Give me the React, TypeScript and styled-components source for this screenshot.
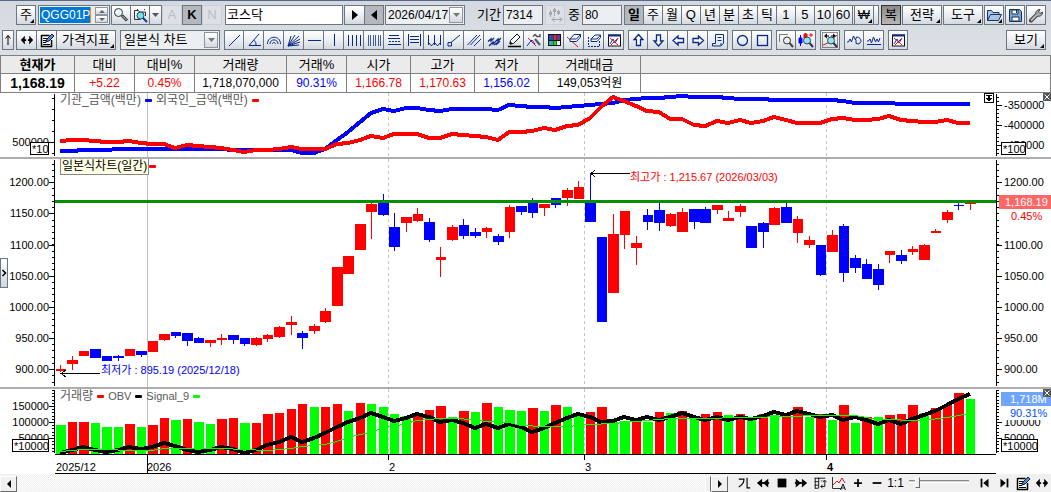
import React from "react";
import styled, { createGlobalStyle, css } from "styled-components";

const NAVY = "#0a2a86";
const RED = "#ff0000";
const BLUE = "#0000ff";
const LIME = "#00ff00";
const FRAME = "#6c7580";
const FONT = `"Liberation Sans", "Noto Sans CJK KR", sans-serif`;

const GlobalStyle = createGlobalStyle`
  * { box-sizing: border-box; }
  body { margin: 0; background: #fff; }
  button, input, select { font-family: ${FONT}; font-size: 12px; color: #000; margin: 0; }
`;

const Page = styled.div`
  display: flex;
  flex-direction: column;
  min-height: 100vh;
  font-family: ${FONT};
  font-size: 12px;
  background: #fff;
  overflow: hidden;
`;

/* ---------- toolbars ---------- */

const Toolbars = styled.header`
  display: flex;
  flex-direction: column;
  gap: 5px;
  padding: 4px 5px 5px 2px;
  border-top: 1px solid #56678a;
  background: linear-gradient(#d3d9df, #dde1e6);
`;

const ToolRow = styled.div`
  display: flex;
  align-items: stretch;
  height: 20px;
`;

const Group = styled.div<{ $gap?: number; $end?: boolean }>`
  display: flex;
  margin-left: ${(p) => (p.$end ? "auto" : `${p.$gap ?? 0}px`)};
`;

type Tone = "normal" | "pressed" | "disabled" | "dark";

const ToolButton = styled.button<{ $w?: number; $tone?: Tone; $menu?: boolean; $joined?: boolean; $gap?: number }>`
  position: relative;
  flex: none;
  display: flex;
  align-items: center;
  justify-content: center;
  width: ${(p) => p.$w ?? 20}px;
  height: 20px;
  padding: 0;
  margin-left: ${(p) => (p.$joined ? -1 : p.$gap ?? 0)}px;
  border: 1px solid ${FRAME};
  background: linear-gradient(#ffffff, #eef1f4 45%, #d3d9e1);
  font-size: 13px;
  line-height: 18px;
  white-space: nowrap;
  ${(p) => p.$tone === "pressed" && css`background: #b3b8bf; font-weight: 700;`}
  ${(p) => p.$tone === "dark" && css`background: linear-gradient(#8b8b8b, #b5b5b5); border-color: #333;`}
  ${(p) => p.$tone === "disabled" && css`background: #dde1e5; border-color: #cbd0d6; color: #b9bec4;`}
  ${(p) => p.$menu && css`
    &::after {
      content: "";
      position: absolute;
      right: 1px;
      bottom: 1px;
      border: 2px solid transparent;
      border-right-color: #000;
      border-bottom-color: #000;
    }
  `}
`;

const Field = styled.div<{ $w: number; $gap?: number; $plain?: boolean }>`
  display: flex;
  flex: none;
  width: ${(p) => p.$w}px;
  height: 20px;
  margin-left: ${(p) => p.$gap ?? 0}px;
  border: 1px solid ${FRAME};
  padding: ${(p) => (p.$plain ? 0 : 1)}px;
  background: ${(p) => (p.$plain ? "#fff" : "#eceff2")};
`;

const TextInput = styled.input<{ $selected?: boolean; $size?: number }>`
  flex: 1;
  min-width: 0;
  width: 0;
  border: 0;
  outline: 0;
  padding: 0 1px;
  background: transparent;
  font-size: ${(p) => p.$size ?? 12}px;
  line-height: 16px;
  ${(p) => p.$selected && css`
    color: #fff;
    background: linear-gradient(90deg, #0078d7 50px, #ff8c00 50px, #ff8c00 51px, transparent 51px);
  `}
`;

const Select = styled.select`
  flex: 1;
  min-width: 0;
  appearance: none;
  border: 0;
  outline: 0;
  padding: 0 2px;
  background: transparent;
  font-size: 13px;
  line-height: 16px;
`;

const DropMark = styled.span`
  flex: none;
  display: flex;
  align-items: center;
  justify-content: center;
  width: 14px;
  height: 16px;
  border: 1px solid #8e959d;
  background: linear-gradient(#fff, #d3d9e1);
`;

const DropButton = styled(DropMark).attrs({ as: "button" })`
  padding: 0;
`;

const Spinner = styled.div`
  display: flex;
  flex-direction: column;
  width: 13px;
`;

const SpinButton = styled.button`
  height: 8px;
  padding: 0;
  display: flex;
  align-items: center;
  justify-content: center;
  border: 1px solid #8e959d;
  background: linear-gradient(#fff, #d3d9e1);
`;

const FieldLabel = styled.label<{ $gap: number }>`
  margin-left: ${(p) => p.$gap}px;
  font-size: 13px;
  line-height: 19px;
  white-space: nowrap;
`;

const WonSlot = styled.div`
  display: flex;
  justify-content: flex-start;
  width: 27px;
  height: 20px;
  margin-left: -1px;
  padding-left: 2px;
  border: 1px solid ${FRAME};
  border-left: 0;
  background: linear-gradient(#fff, #d3d9e1);
`;

const Won = styled(ToolButton)`
  border-width: 0 1px;
  height: 18px;
`;

/* ---------- quote table ---------- */

const QuoteTable = styled.table`
  width: 100%;
  height: 38px;
  table-layout: fixed;
  border-collapse: collapse;
  th, td {
    border: 1px solid #808080;
    padding: 0;
    height: 18px;
    line-height: 16px;
    text-align: center;
    white-space: nowrap;
  }
  th { background: #ebebeb; font-weight: 400; font-size: 13px; }
  td { background: #fff; font-size: 12px; }
`;

const Th = styled.th<{ $strong?: boolean }>`
  && { font-weight: ${(p) => (p.$strong ? 700 : 400)}; }
`;

const Td = styled.td<{ $color?: string; $strong?: boolean }>`
  color: ${(p) => p.$color ?? "#000"};
  && {
    font-weight: ${(p) => (p.$strong ? 700 : 400)};
    font-size: ${(p) => (p.$strong ? 14 : 12)}px;
  }
`;

/* ---------- charts ---------- */

const Pane = styled.section<{ $h: number; $divided?: boolean }>`
  position: relative;
  display: grid;
  grid-template-columns: 55px minmax(0, 1fr) 55px;
  height: ${(p) => p.$h + (p.$divided ? 2 : 0)}px;
  border-bottom: ${(p) => (p.$divided ? "2px solid #adadad" : "0")};
  svg { display: block; }
`;

const AxisSvg = styled.svg`
  width: 55px;
  overflow: hidden;
  font-size: 11px;
`;

const PlotSvg = styled.svg`
  width: 100%;
  font-size: 11px;
`;

const Legend = styled.div`
  position: absolute;
  left: 60px;
  top: 0;
  display: flex;
  align-items: center;
  height: 15px;
  gap: 4px;
  color: #585858;
  line-height: 15px;
`;

const LegendText = styled.span<{ $latin?: boolean; $boxed?: boolean }>`
  font-size: ${(p) => (p.$latin ? 11 : 12)}px;
  white-space: nowrap;
  ${(p) => p.$boxed && css`
    color: #000;
    background: #ffffe6;
    border: 1px solid #888;
    border-top: 0;
    margin-top: 1px;
    margin-right: -4px;
    padding: 0 1px;
  `}
`;

const Dash = styled.span<{ $color: string }>`
  width: 7px;
  height: 3px;
  border-radius: 1px;
  background: ${(p) => p.$color};
`;

const CloseButton = styled.button`
  position: absolute;
  top: 0;
  right: 0;
  width: 8px;
  height: 8px;
  padding: 0;
  border: 0;
  background: #555;
`;

const PinButton = styled.button`
  position: absolute;
  top: 0;
  right: 57px;
  width: 10px;
  height: 10px;
  padding: 0;
  border: 1px solid #000;
  background: #fff;
`;

const SideHandle = styled.button`
  position: absolute;
  left: 0;
  top: 99px;
  width: 8px;
  height: 30px;
  padding: 0;
  border: 1px solid ${FRAME};
  background: linear-gradient(#fff, #cfd6de);
`;

/* ---------- bottom bar ---------- */

const BottomBar = styled.footer`
  display: flex;
  align-items: stretch;
  height: 18px;
  background: #f0f0f0;
`;

const Track = styled.div`
  flex: 1;
  background: repeating-conic-gradient(#ffffff 0 25%, #eeeeee 0 50%) 0 0 / 2px 2px;
`;

const ScrollButton = styled.button`
  width: 17px;
  height: 16px;
  margin-top: 2px;
  padding: 0;
  display: flex;
  align-items: center;
  justify-content: center;
  border: 1px solid #fff;
  border-right-color: #696969;
  border-bottom-color: #696969;
  background: #f0f0f0;
`;

const Splitter = styled.div`
  width: 6px;
  margin-top: 2px;
  border: 1px solid #fff;
  border-right-color: #696969;
  background: #f0f0f0;
`;

const FlatButton = styled.button`
  width: 19px;
  padding: 0;
  display: flex;
  align-items: center;
  justify-content: center;
  border: 0;
  background: transparent;
  font-size: 12px;
  line-height: 18px;
`;

const FlatGroup = styled.div`
  display: flex;
  margin-left: 6px;
`;

const Zoomer = styled.input`
  appearance: none;
  width: 60px;
  height: 14px;
  margin: 0 6px 0 4px;
  background: transparent;
  &::-webkit-slider-runnable-track {
    height: 3px;
    border-top: 1px solid #8a8a8a;
    border-bottom: 1px solid #fff;
    background: #d5d5d5;
  }
  &::-webkit-slider-thumb {
    appearance: none;
    width: 5px;
    height: 11px;
    margin-top: -4px;
    background: #f0f0f0;
    border: 1px solid #fff;
    border-right-color: #696969;
    border-bottom-color: #696969;
  }
`;

/* ---------- icons ---------- */

const Glyph = ({ children, s = 16 }: { children: React.ReactNode; s?: number }) => (
  <svg width={s} height={s} viewBox="0 0 16 16" fill="none" stroke={NAVY} aria-hidden="true">
    {children}
  </svg>
);

const Triangle = ({ dir, color = "#000", w = 6, h = 8 }: { dir: "l" | "r" | "u" | "d"; color?: string; w?: number; h?: number }) => {
  const pts = {
    l: `${w},0 0,${h / 2} ${w},${h}`,
    r: `0,0 ${w},${h / 2} 0,${h}`,
    u: `0,${h} ${w / 2},0 ${w},${h}`,
    d: `0,0 ${w / 2},${h} ${w},0`,
  }[dir];
  return (
    <svg width={w} height={h} aria-hidden="true">
      <polygon points={pts} fill={color} />
    </svg>
  );
};

const BothWays = () => (
  <Glyph s={14}>
    <path d="M5.500 3 1 8l4.500 5zM10.500 3 15 8l-4.500 5z" fill="#000" stroke="none" />
    <path d="M4 8h3M9 8h3" stroke="#000" strokeWidth="2" />
  </Glyph>
);

const EditNote = () => (
  <Glyph>
    <path d="M2.500 3.500h8M2.500 3v11.500h10V8" stroke="#000" strokeWidth="1.500" fill="#fff" />
    <path d="M4 6.500h5M4 8.500h3M4 10.500h3M4 12.500h7" stroke="#000" />
    <path d="m7 10 1-3 5-5 2 2-5 5z" fill="#5b86c8" stroke="#0b1c50" />
  </Glyph>
);

const Magnifier = () => (
  <Glyph>
    <circle cx="5.500" cy="5.500" r="4" fill="#e9f3f8" stroke="#333" />
    <path d="M9 8.500 14 13.500" stroke="#333" strokeWidth="3" />
    <path d="m9.500 9 4 4" stroke="#ddd" />
    <path d="m3.500 5.500 2-2" stroke="#fff" strokeWidth="1.500" />
  </Glyph>
);

const PageSearch = () => (
  <Glyph>
    <path d="M2.500 12.500v-9h4l1 1.500h6v4M2.500 12.500h6" stroke="#333" />
    <circle cx="8.500" cy="8.500" r="3.500" fill="#6fe3ee" stroke="#345" />
    <path d="m11 11 4 4" stroke="#123a8c" strokeWidth="2" />
    <path d="M12.500 3v-1M5 2.500h1" stroke="#333" />
  </Glyph>
);

const lineIcons: Record<string, React.ReactNode> = {
  추세선: <path d="M3 14 14 3" />,
  각도선: <path d="M13 2 3 13.500h12M8 8.500c2 1 2 3 2 5" />,
  "피보나치 원호": <path d="M1.500 12c0-9 13-9 13 0M4 12c0-5.500 8-5.500 8 0M6.500 12c0-2 3-2 3 0" />,
  "피보나치 팬": <path d="M2 14 5 4M2 14 9 3M2 14 13 4M2 14l12-7M2 14l12-4M2 14l11-1" />,
  수평선: <path d="M2 8.500h13" />,
  수직선: <path d="M8.500 2v12" />,
  "수직 분할": <path d="M2.500 3v11M6.500 3v11M10.500 3v11M14.500 3v11" />,
  "시간 분할": <path d="M2.500 3v11M4.500 3v11M7.500 3v11M9.500 3v11M12.500 3v11M14.500 3v11" strokeOpacity=".75" />,
  되돌림: <path d="M3 3.500h10M2 6.500h12M3 9.500h2M6 9.500h2M9 9.500h2M12 9.500h2M2 12.500h13" />,
  "가격 분할": <path d="M2.500 2v12M14.500 2v12M4 4.500h9M4 7.500h9M4 10.500h9" />,
  사이클: <path d="M2.500 3v10M8.500 3v10M14.500 3v10M3 11l2 2.500h1L8 11M9 11l2 2.500h1l2-2.500" />,
  연결선: <path d="M5 10.500 14 3M2 10.500h3.500V14H2z" />,
  "평행 채널": <path d="M1.500 13 11 3M4.500 13 14 3M8 14l7-7" />,
  "회귀 채널": <path d="M2 9.500 5 7v2l3-3M3 14l4-4v2l5-5v2l3-3M8 13l3-2v1l3-3" strokeWidth="1.300" />,
  연필: (
    <>
      <path d="M4 12 4.500 8.500 11 2l3 3-6.500 6.500z" fill="#fff" stroke="#111" />
      <path d="m4 12 2-.5-1.500-1.500z" fill="#000" stroke="#111" />
      <path d="M2 14.500h13" stroke="#000" strokeWidth="1.500" />
    </>
  ),
  "선 설정": (
    <>
      <path d="m1 14 3-4 2-2 3 4" stroke="#1030d8" />
      <path d="m2 6 8 8" stroke="#e01818" />
      <path d="m9 7 5 6" stroke="#555" strokeWidth="2" />
      <path d="M7 4.500 9 2.500l2 2h3V2" stroke="#555" strokeWidth="1.500" />
    </>
  ),
  색상: (
    <>
      <rect x="2" y="2" width="13" height="12" fill="#111" stroke="none" />
      <path d="M3 3h4v5H3z" fill="#2746c8" stroke="none" />
      <path d="M7.500 3h3v5h-3z" fill="#d23a2c" stroke="none" />
      <path d="M11 3h3v5h-3z" fill="#6b35a0" stroke="none" />
      <path d="M3 9h4v4H3z" fill="#18b8b0" stroke="none" />
      <path d="M7.500 9h3v4h-3z" fill="#22d62c" stroke="none" />
      <path d="M11 9h3v4h-3z" fill="#f2f2f2" stroke="none" />
    </>
  ),
  지우개: (
    <>
      <path d="m1 5 11 10" stroke="#e01818" />
      <path d="m4 7 4-4.500h6.500L10.500 7zM4 7v2.500h6.500l4-4.500V2.500" fill="#fff" />
    </>
  ),
  "영역 지우기": (
    <>
      <path d="M2.500 5v9.500h11V9" strokeDasharray="2 1" />
      <path d="m5 7 4-4h5.500L11 7zM5 7v2.500h6l3.500-4V3" fill="#fff" />
    </>
  ),
  "전체 삭제": (
    <>
      <rect x="2.500" y="3" width="12" height="11" fill="#fff" stroke="#111" />
      <path d="M2 3.500h13" strokeWidth="2" />
      <path d="m4 12 3-5 2 4 3-5" stroke="#1030d8" />
      <path d="m4 6 8 7M12 6l-7 7" stroke="#e01818" />
    </>
  ),
};

const shapeIcons: Record<string, React.ReactNode> = {
  위로: <path d="M8.500 2.500 13 7.500h-2.500v6h-4v-6H4z" fill="#fff" strokeWidth="1.300" />,
  아래로: <path d="M8.500 14 13 9h-2.500V3h-4v6H4z" fill="#fff" strokeWidth="1.300" />,
  왼쪽: <path d="M3 8.500 8 4v2.500h5.500v4H8V13z" fill="#fff" strokeWidth="1.300" />,
  오른쪽: <path d="M13.500 8.500 8.500 4v2.500H3v4h5.500V13z" fill="#fff" strokeWidth="1.300" />,
  메모: <path d="M5.500 2.500h8v9M5.500 2.500v9H2.500v2.500h8l3-2.500M7.500 5.500h4M7.500 8.500h4M11 14v-3" />,
};

const circleIcons: Record<string, React.ReactNode> = {
  원: <circle cx="8.500" cy="8.500" r="5" strokeWidth="1.300" />,
  사각형: <rect x="3.500" y="3.500" width="10" height="10" strokeWidth="1.300" />,
};

const Lens = () => (
  <>
    <circle cx="9" cy="8.500" r="3.500" fill="#8fe6ee" stroke="#345" />
    <path d="m11.500 11 3.500 4" stroke="#335" strokeWidth="2" />
  </>
);

const zoomIcons: Record<string, React.ReactNode> = {
  "영역 확대": (
    <>
      <path d="M1.500 9.500v-7h9" strokeDasharray="1 1" stroke="#000" />
      <circle cx="9" cy="8.500" r="3.500" fill="#eee" stroke="#333" />
      <path d="m11.500 11 3.500 4" stroke="#444" strokeWidth="2" />
    </>
  ),
  "봉 확대": (
    <>
      <path d="M2.500 3v11M1 6h3v5H1z" stroke={BLUE} fill={BLUE} />
      <path d="M7.500 1v7M6 2h3v4H6zM13 1v4M11 3h4" stroke={RED} fill={RED} />
      <Lens />
    </>
  ),
};

const fitIcons: Record<string, React.ReactNode> = {
  "전체 보기": (
    <>
      <rect x=".5" y=".5" width="15" height="15" strokeDasharray="1 1" stroke="#222" />
      <path d="M3 4h4M9 4h4" stroke="#000" />
      <path d="m5 1.500-3 2.500 3 2.500zM11 1.500l3 2.500-3 2.500z" fill="#000" stroke="none" />
      <path d="m1 13 5-2 3-3 6-5" stroke="#e01818" />
      <Lens />
    </>
  ),
};

const waveIcons: Record<string, React.ReactNode> = {
  "파동 조정": <path d="M1 10h1.500L4 7l1.500 3 2-6 2 4 1-3c3 0 4.500 2 4.500 4.500L13 12l-3-.5V8" />,
  "파동 표시": <path d="M1 9h1.500L4 7l1.500 4 2-6 2 5 1.500-3 1.500 3L14 6M1 12.500h14" />,
};

const IconSet = ({ icons, gap }: { icons: Record<string, React.ReactNode>; gap: number }) => (
  <Group $gap={gap}>
    {Object.entries(icons).map(([name, art], i) => (
      <ToolButton key={name} title={name} aria-label={name} $w={i ? 21 : 20} $joined={i > 0}>
        <Glyph>{art}</Glyph>
      </ToolButton>
    ))}
  </Group>
);

/* ---------- data ---------- */

// [high, body top, body bottom, low, rising] on the vertical scale of the price pane
const candles: number[][] = [
  [365, 369, 371, 372, 1], [356, 360, 364, 370, 1], [351, 351, 356, 356, 1], [349, 349, 358, 358, 0],
  [356, 356, 361, 361, 0], [355, 356, 358, 361, 0], [349, 349, 356, 356, 1], [351, 351, 355, 357, 0],
  [341, 341, 352, 352, 1], [334, 334, 340, 341, 1], [332, 332, 336, 338, 0], [333, 333, 341, 346, 0],
  [337, 338, 343, 343, 0], [340, 340, 343, 347, 1], [334, 338, 340, 345, 1], [335, 335, 340, 344, 0],
  [338, 338, 344, 346, 0], [337, 338, 345, 346, 1], [334, 335, 339, 342, 1], [326, 327, 337, 338, 1],
  [316, 322, 325, 335, 1], [331, 333, 338, 349, 0], [324, 326, 331, 334, 1], [308, 311, 322, 323, 1],
  [267, 267, 306, 306, 1], [256, 256, 274, 274, 1], [224, 224, 250, 250, 1], [203, 204, 212, 239, 1],
  [194, 202, 215, 216, 0], [213, 227, 247, 251, 0], [217, 217, 223, 232, 1], [208, 214, 221, 222, 1],
  [218, 222, 240, 242, 0], [247, 257, 260, 277, 1], [225, 227, 240, 241, 1], [219, 225, 236, 239, 0],
  [228, 232, 236, 238, 0], [227, 228, 232, 238, 1], [234, 236, 242, 245, 0], [205, 207, 232, 238, 1],
  [206, 206, 212, 215, 0], [198, 202, 213, 218, 0], [204, 204, 208, 216, 1], [198, 198, 205, 208, 0],
  [188, 190, 198, 206, 1], [181, 187, 199, 199, 1], [173, 202, 222, 222, 0], [237, 237, 322, 322, 0],
  [214, 234, 293, 293, 1], [211, 211, 235, 249, 1], [236, 243, 248, 265, 1], [209, 215, 222, 230, 0],
  [202, 210, 223, 231, 0], [213, 214, 226, 227, 1], [208, 212, 232, 232, 1], [209, 209, 222, 229, 0],
  [207, 209, 223, 223, 0], [205, 205, 210, 214, 1], [211, 218, 221, 221, 1], [204, 206, 212, 217, 1],
  [226, 226, 248, 248, 0], [222, 223, 232, 248, 0], [207, 208, 225, 225, 1], [202, 207, 223, 223, 0],
  [216, 219, 233, 243, 1], [236, 240, 245, 248, 1], [245, 245, 275, 276, 0], [230, 235, 252, 252, 1],
  [224, 226, 273, 282, 0], [255, 258, 268, 273, 0], [259, 264, 279, 279, 0], [264, 269, 285, 290, 0],
  [251, 251, 255, 263, 1], [250, 255, 261, 264, 0], [246, 249, 252, 255, 1], [244, 245, 260, 260, 1],
  [229, 231, 233, 233, 1], [210, 212, 220, 223, 1], [203, 205, 206, 210, 0], [203, 203, 204, 210, 1],
];

const institution = [
  151, 151, 150, 150, 150, 149, 149, 149, 149, 149, 149, 149, 149, 149, 149, 150, 150, 150, 150, 150,
  150, 153, 153, 149, 140, 132, 122, 113, 109, 111, 108, 108, 110, 111, 109, 109, 109, 109, 110, 105,
  106, 107, 107, 108, 107, 106, 105, 104, 103, 100, 99, 98, 98, 97, 96, 97, 97, 97, 98, 99,
  99, 99, 100, 100, 100, 100, 100, 100, 101, 103, 103, 103, 103, 104, 104, 104, 104, 104, 104, 104,
];

const foreign = [
  141, 140, 140, 141, 142, 142, 141, 143, 144, 144, 148, 145, 146, 147, 148, 150, 152, 150, 150, 149,
  147, 149, 149, 149, 144, 143, 140, 136, 138, 134, 134, 134, 138, 138, 134, 135, 136, 137, 140, 132,
  132, 131, 128, 130, 126, 125, 118, 107, 97, 101, 106, 111, 112, 119, 119, 125, 126, 121, 123, 120,
  123, 121, 117, 120, 123, 123, 123, 119, 118, 120, 120, 119, 116, 120, 121, 122, 122, 120, 123, 123,
];

const volumeTops = [
  425, 422, 422, 423, 427, 427, 424, 427, 425, 418, 420, 419, 422, 424, 419, 418, 423, 423, 414, 413,
  409, 404, 407, 407, 404, 411, 403, 404, 407, 414, 416, 416, 410, 406, 417, 411, 412, 403, 407, 410,
  411, 408, 411, 405, 407, 413, 412, 407, 422, 421, 420, 422, 412, 413, 411, 417, 414, 412, 415, 414,
  417, 414, 415, 415, 407, 417, 414, 420, 405, 423, 417, 417, 415, 414, 405, 413, 408, 405, 393, 399,
];

const volumeColors = [
  "grrgggrgrr", "grggrrgrrr", "rrgrrgrggg", "grrrgrgrgg",
  "grgrggrrgg", "rgrgrgrrgr", "grgrrgrgrg", "rgrrrgrrrg",
].join("");

const obv = [
  453, 450, 447, 450, 452, 450, 447, 449, 447, 443, 446, 450, 452, 450, 447, 449, 453, 450, 445, 442,
  437, 442, 438, 433, 427, 422, 418, 413, 417, 421, 418, 414, 417, 422, 420, 423, 428, 424, 428, 424,
  427, 432, 428, 423, 418, 414, 417, 422, 421, 417, 420, 417, 420, 417, 413, 417, 420, 417, 420, 417,
  419, 416, 412, 415, 411, 414, 417, 415, 420, 417, 420, 424, 420, 424, 419, 415, 411, 405, 399, 394,
];

const signal: [number, number][] = [
  [0, 451], [2, 449], [8, 450], [9, 448], [14, 448], [16, 449], [18, 450], [20, 448], [21, 446],
  [23, 444], [24, 441], [25, 437], [26, 434], [27, 432], [28, 427], [29, 426], [30, 423], [31, 420],
  [33, 418], [34, 418], [36, 419], [37, 421], [39, 422], [40, 425], [42, 426], [44, 426], [46, 424],
  [48, 423], [50, 421], [53, 418], [55, 418], [60, 417], [63, 416], [66, 415], [69, 415], [71, 419],
  [75, 420], [77, 417], [79, 413],
];

const LEFT = 55;
const SPAN = 941;
const pitch = (i: number) => 60.7 + 11.515 * i;
const center = (i: number) => Math.floor(pitch(i));
const wide = (i: number) => pitch(i) % 1 < 0.65;
const path = (ys: number[]) => ys.map((y, i) => `${center(i)},${y}`).join(" ");
const percent = (x: number) => `${((x - LEFT) / SPAN) * 100}%`;

/* ---------- chart pieces ---------- */

const Plot = ({ top, height, children, notes }: { top: number; height: number; children: React.ReactNode; notes?: React.ReactNode }) => (
  <PlotSvg height={height}>
    <svg width="100%" height={height} viewBox={`${LEFT} ${top} ${SPAN} ${height}`} preserveAspectRatio="none" shapeRendering="crispEdges">
      <path d={`M147.500 ${top}v${height}`} stroke="#c0c0c0" />
      {[388, 584, 826].map((x) => (
        <path key={x} d={`M${x}.5 ${top}v${height}`} stroke="#c4c4c4" strokeDasharray="3 3" />
      ))}
      {children}
    </svg>
    {notes}
  </PlotSvg>
);

type AxisProps = {
  side: "left" | "right";
  top: number;
  height: number;
  labels: [number, string][];
  minor: number;
  from: number;
  children?: React.ReactNode;
};

const Axis = ({ side, top, height, labels, minor, from, children }: AxisProps) => {
  const ticks: number[] = [];
  for (let y = from; y < top + height - 1; y += minor) ticks.push(Math.round(y));
  const left = side === "left";
  return (
    <AxisSvg height={height} viewBox={`0 ${top} 55 ${height}`}>
      <g stroke="#000" shapeRendering="crispEdges">
        <path d={`M${left ? 54 : 0}.5 ${top + 1}v${height - 2}`} />
        {ticks.map((y) => (
          <path key={y} d={left ? `M52 ${y}.5h2` : `M1 ${y}.5h2`} />
        ))}
        {labels.map(([y]) => (
          <path key={y} d={left ? `M49 ${y}.5h5` : `M1 ${y}.5h5`} />
        ))}
      </g>
      {labels.map(([y, text]) => (
        <text key={y} x={left ? 49 : 8} y={y + 4} textAnchor={left ? "end" : "start"}>
          {text}
        </text>
      ))}
      {children}
    </AxisSvg>
  );
};

const Multiplier = ({ x, y, w, text }: { x: number; y: number; w: number; text: string }) => (
  <g>
    <rect x={x + 0.5} y={y + 0.5} width={w - 1} height="12" fill="#fff" stroke="#000" />
    <text x={x + 2} y={y + 11}>{text}</text>
  </g>
);

const CloseMark = () => (
  <CloseButton aria-label="닫기">
    <svg width="8" height="8" aria-hidden="true"><path d="m1.500 1.500 5 5m0-5-5 5" stroke="#fff" /></svg>
  </CloseButton>
);

const priceLabels: [number, string][] = [
  [182, "1200.00"], [213, "1150.00"], [245, "1100.00"], [276, "1050.00"],
  [307, "1000.00"], [338, "950.00"], [369, "900.00"],
];

// the current price badge takes the place of the 1150 label
const rightPriceLabels = priceLabels.filter(([y]) => y !== 213);

const quotes = [
  { w: 74, name: "현재가", value: "1,168.19", strong: true },
  { w: 60, name: "대비", value: "+5.22", color: RED },
  { w: 60, name: "대비%", value: "0.45%", color: RED },
  { w: 92, name: "거래량", value: "1,718,070,000" },
  { w: 60, name: "거래%", value: "90.31%", color: BLUE },
  { w: 64, name: "시가", value: "1,166.78", color: RED },
  { w: 64, name: "고가", value: "1,170.63", color: RED },
  { w: 64, name: "저가", value: "1,156.02", color: BLUE },
  { w: 102, name: "거래대금", value: "149,053억원" },
];

const periods = ["일", "주", "월", "Q", "년", "분", "초", "틱", "1", "5", "10", "60"];

const TopToolbar = () => (
  <ToolRow>
    <ToolButton $gap={14} $menu>주</ToolButton>
    <Field $w={72} $gap={2}>
      <TextInput aria-label="종목 코드" defaultValue="QGG01P" $selected />
      <Spinner>
        <SpinButton aria-label="이전 종목"><Triangle dir="u" w={6} h={3} color="#666" /></SpinButton>
        <SpinButton aria-label="다음 종목"><Triangle dir="d" w={6} h={3} color="#666" /></SpinButton>
      </Spinner>
    </Field>
    <ToolButton $gap={1} aria-label="종목 검색"><Magnifier /></ToolButton>
    <ToolButton $joined aria-label="종목 목록"><PageSearch /></ToolButton>
    <ToolButton $w={13} $joined aria-label="목록 열기"><Triangle dir="d" w={7} h={4} color="#555" /></ToolButton>
    <ToolButton $tone="disabled">A</ToolButton>
    <ToolButton $tone="pressed">K</ToolButton>
    <ToolButton $tone="disabled">N</ToolButton>
    <Field $w={118} $gap={3} $plain>
      <TextInput aria-label="종목명" defaultValue="코스닥" $size={13} />
    </Field>
    <ToolButton $gap={1} $w={21} aria-label="다음"><Triangle dir="r" h={10} /></ToolButton>
    <ToolButton $joined $tone="pressed" aria-label="이전"><Triangle dir="l" h={10} /></ToolButton>
    <Field $w={80} $gap={1}>
      <TextInput aria-label="날짜" defaultValue="2026/04/17" />
      <DropButton aria-label="달력"><Triangle dir="d" w={7} h={4} color="#777" /></DropButton>
    </Field>
    <FieldLabel $gap={12} htmlFor="span">기간</FieldLabel>
    <Field $w={40} $gap={2}>
      <TextInput id="span" defaultValue="7314" />
    </Field>
    <ToolButton $gap={2} $tone="disabled" aria-label="봉 간격">
      <Glyph>
        <path d="M3.500 3v7M7.500 1v8M11.500 3v5" stroke="#a3a8ad" />
        <path d="M3.500 5v3M7.500 2v3M11.500 4v3" stroke="#a3a8ad" strokeWidth="3" />
        <path d="M5 12.500h10M12.500 10l2.500 2.500-2.500 2.500M7.500 10 5 12.500 7.500 15" stroke="#a3a8ad" />
      </Glyph>
    </ToolButton>
    <FieldLabel $gap={3} htmlFor="visible">중</FieldLabel>
    <Field $w={40} $gap={2}>
      <TextInput id="visible" defaultValue="80" />
    </Field>
    <Group $gap={2}>
      {periods.map((p, i) => (
        <ToolButton key={p} $joined={i > 0} $tone={i === 0 ? "pressed" : "normal"}>{p}</ToolButton>
      ))}
      <WonSlot><Won $menu>₩</Won></WonSlot>
    </Group>
    <Group $end>
      <ToolButton $tone="dark">복</ToolButton>
      <ToolButton $w={40} $gap={1} $menu>전략</ToolButton>
      <ToolButton $w={40} $gap={1} $menu>도구</ToolButton>
      <ToolButton $gap={1} $menu aria-label="열기">
        <Glyph>
          <path d="M1.500 13.500v-10h4l1.500 2h6v2M1.500 13.500l3-6h11l-3 6z" fill="#a8c4e6" stroke="#17325f" />
        </Glyph>
      </ToolButton>
      <ToolButton $gap={1} aria-label="저장">
        <Glyph>
          <path d="M2.500 2.500h10l2 2v10h-12z" fill="#7fa3cf" stroke="#17325f" />
          <path d="M5 3h6v4H5zM5 10h7v4H5z" fill="#fff" stroke="#17325f" />
          <path d="M9.500 3v3" stroke="#17325f" />
        </Glyph>
      </ToolButton>
      <ToolButton $gap={1} aria-label="설정">
        <Glyph>
          <path d="m3 13.500 6-6" stroke="#444" strokeWidth="4" strokeLinecap="round" />
          <path d="M8 8C7 5 9 2.500 12 2.500L10.500 5 12 6.500l2.500-1.500C15 8 12 10 9.500 9z" fill="#aaa" stroke="#444" />
          <path d="m3 13.500 6-6" stroke="#bbb" strokeWidth="2" />
        </Glyph>
      </ToolButton>
    </Group>
  </ToolRow>
);

const DrawToolbar = () => (
  <ToolRow>
    <ToolButton $w={12} aria-label="위로 이동">
      <svg width="8" height="12" aria-hidden="true"><path d="M4 11V1.500M1.500 4.500 4 1.500l2.500 3" fill="none" stroke="#000" /></svg>
    </ToolButton>
    <ToolButton $gap={2} $w={21} aria-label="좌우 이동"><BothWays /></ToolButton>
    <ToolButton $joined $w={21} aria-label="편집"><EditNote /></ToolButton>
    <ToolButton $joined $w={60} $menu>가격지표</ToolButton>
    <Field $w={100} $gap={4}>
      <Select aria-label="차트 종류" defaultValue="candle">
        <option value="candle">일본식 차트</option>
      </Select>
      <DropMark><Triangle dir="d" w={7} h={4} color="#777" /></DropMark>
    </Field>
    <IconSet icons={lineIcons} gap={4} />
    <IconSet icons={shapeIcons} gap={4} />
    <IconSet icons={circleIcons} gap={4} />
    <IconSet icons={zoomIcons} gap={4} />
    <IconSet icons={fitIcons} gap={4} />
    <IconSet icons={waveIcons} gap={4} />
    <IconSet icons={{ "지표 삭제": lineIcons["전체 삭제"] }} gap={4} />
    <Group $end>
      <ToolButton $w={40} $menu>보기</ToolButton>
    </Group>
  </ToolRow>
);

const FlowPane = () => (
  <Pane $h={64} $divided aria-label="투자자별 금액">
    <Axis side="left" top={93} height={64} labels={[[142, "500000"]]} minor={11} from={98}>
      <Multiplier x={30} y={142} w={19} text="*10" />
    </Axis>
    <Plot top={93} height={64}>
      <polyline points={path(institution)} fill="none" stroke={BLUE} strokeWidth="4" strokeLinejoin="round" />
      <polyline points={path(foreign)} fill="none" stroke={RED} strokeWidth="4" strokeLinejoin="round" />
    </Plot>
    <Axis side="right" top={93} height={64} labels={[[105, "-350000"], [125, "-400000"], [145, "-450000"]]} minor={4} from={97}>
      <Multiplier x={5} y={142} w={25} text="*100" />
    </Axis>
    <Legend>
      <LegendText>기관_금액(백만)</LegendText>
      <Dash $color={BLUE} />
      <LegendText>외국인_금액(백만)</LegendText>
      <Dash $color={RED} />
    </Legend>
    <PinButton aria-label="내리기">
      <svg width="8" height="8" aria-hidden="true" shapeRendering="crispEdges">
        <path d="M1 1h6v1H1zM3 2h2v2H3zM1 4h6v1H1zM2 5h4v1H2zM3 6h2v1H3z" fill="#000" />
      </svg>
    </PinButton>
    <CloseMark />
  </Pane>
);

const PricePane = () => (
  <Pane $h={228} $divided aria-label="가격">
    <Axis side="left" top={159} height={228} labels={priceLabels} minor={6.23} from={163.5} />
    <Plot
      top={159}
      height={228}
      notes={
        <>
          <text x={percent(630)} y="22" fill={RED}>최고가 : 1,215.67 (2026/03/03)</text>
          <text x={percent(101)} y="215" fill={BLUE}>최저가 : 895.19 (2025/12/18)</text>
        </>
      }
    >
      {candles.map(([high, top, bottom, low, up], i) => {
        const x = center(i);
        const color = up ? RED : BLUE;
        return (
          <g key={i} fill={color}>
            <rect x={x} y={high} width="1" height={low - high} />
            <rect x={wide(i) ? x - 5 : x - 4} y={top} width={wide(i) ? 11 : 10} height={bottom - top} />
          </g>
        );
      })}
      <path d="M55 201.500h941" stroke="#009000" strokeWidth="3" />
      <path d="M591 173.500h39M595 170l-4 3.500 4 3.500M61 373.500h39M66 370l-5 3.500 5 3.500" stroke="#000" fill="none" />
    </Plot>
    <Axis side="right" top={159} height={228} labels={rightPriceLabels} minor={6.23} from={163.5}>
      <rect x="3" y="195" width="52" height="14" fill="#ff6666" />
      <text x="9" y="206" fill="#fff">1,168.19</text>
      <text x="15" y="220" fill={RED}>0.45%</text>
    </Axis>
    <Legend>
      <LegendText $boxed>일본식차트(일간)</LegendText>
      <Dash $color={RED} />
    </Legend>
    <SideHandle aria-label="패널 열기">
      <svg width="6" height="8" aria-hidden="true"><path d="m1.500 1 3 3-3 3" fill="none" stroke="#000" strokeWidth="1.500" /></svg>
    </SideHandle>
  </Pane>
);

const VolumePane = () => (
  <Pane $h={65} aria-label="거래량">
    <Axis side="left" top={389} height={65} labels={[[406, "150000"], [422, "100000"], [438, "50000"]]} minor={3.2} from={390}>
      <Multiplier x={12} y={439} w={37} text="*10000" />
    </Axis>
    <Plot top={389} height={65}>
      {volumeTops.map((y, i) => (
        <rect key={i} x={center(i) - 4} y={y} width={wide(i) ? 9 : 10} height={454 - y} fill={volumeColors[i] === "r" ? RED : LIME} />
      ))}
      <polyline points={path(obv)} fill="none" stroke="#000" strokeWidth="4" strokeLinejoin="round" />
      <polyline points={signal.map(([i, y]) => `${center(i)},${y}.5`).join(" ")} fill="none" stroke={LIME} />
    </Plot>
    <Axis side="right" top={389} height={65} labels={[[422, "100000"], [438, "50000"]]} minor={3.2} from={390}>
      <rect x="5" y="392" width="50" height="14" fill="#6fa5ff" />
      <rect x="7" y="406" width="48" height="14" fill="#fff" />
      <text x="14" y="403" fill="#fff">1,718M</text>
      <text x="14" y="417" fill="#0050f0">90.31%</text>
      <Multiplier x={5} y={439} w={37} text="*10000" />
    </Axis>
    <Legend>
      <LegendText>거래량</LegendText>
      <Dash $color={RED} />
      <LegendText $latin>OBV</LegendText>
      <Dash $color="#000" />
      <LegendText $latin>Signal_9</LegendText>
      <Dash $color={LIME} />
    </Legend>
    <CloseMark />
  </Pane>
);

const months: [number, string][] = [[388, "2"], [584, "3"], [826, "4"]];

const TimePane = () => (
  <Pane $h={20} aria-label="날짜">
    <span />
    <PlotSvg height="20">
      <g stroke="#000" shapeRendering="crispEdges">
        <line x1="0" x2="100%" y1="0.5" y2="0.5" />
        <line x1="0" x2="100%" y1="19.5" y2="19.5" />
        <line x1={percent(147.5)} x2={percent(147.5)} y1="0" y2="20" />
        {months.map(([x]) => (
          <line key={x} x1={percent(x + 0.5)} x2={percent(x + 0.5)} y1="0" y2="6" />
        ))}
      </g>
      <text x="1" y="17">2025/12</text>
      <text x={percent(147)} y="17">2026</text>
      {months.map(([x, t]) => (
        <text key={t} x={percent(x + 1)} y="17" fontWeight={t === "4" ? 700 : 400}>{t}</text>
      ))}
    </PlotSvg>
  </Pane>
);

const Controls = () => (
  <BottomBar>
    <ScrollButton aria-label="왼쪽으로"><Triangle dir="l" w={4} h={8} /></ScrollButton>
    <Track />
    <Splitter />
    <ScrollButton aria-label="오른쪽으로"><Triangle dir="r" w={4} h={8} /></ScrollButton>
    <FlatGroup>
      <FlatButton aria-label="기준선">
        <Glyph s={14}><path d="M2 3.500h6c0 4-2 7-6 9M11.500 2v11.500H15" stroke="#000" strokeWidth="1.300" /></Glyph>
      </FlatButton>
      <FlatButton aria-label="뒤로 재생">
        <Glyph s={14}><path d="M7 3v10L1 8zM14 3v10L8 8z" fill="#000" stroke="none" /><path d="M4 8h11" stroke="#000" strokeWidth="2" /></Glyph>
      </FlatButton>
      <FlatButton aria-label="정지"><Glyph s={14}><path d="M3 3h10v10H3z" fill="#000" stroke="none" /></Glyph></FlatButton>
      <FlatButton aria-label="앞으로 재생">
        <Glyph s={14}><path d="M9 3v10l6-5zM2 3v10l6-5z" fill="#000" stroke="none" /><path d="M1 8h11" stroke="#000" strokeWidth="2" /></Glyph>
      </FlatButton>
      <FlatButton aria-label="기간 이동">
        <Glyph s={14}>
          <path d="M2 2.500h12M2.500 2v12M6.500 2v12M2 6.500h4M2 10.500h4M2 14h4" stroke="#000" />
          <path d="M9 5.500h4" stroke="#000" strokeDasharray="1 1" />
          <path d="M13.500 5v7H9M11 10l-2 2 2 2M11.500 7l2-2 2 2" stroke="#000" />
        </Glyph>
      </FlatButton>
      <FlatButton aria-label="자동 차트">
        <Glyph s={16}>
          <path d="M1.500 2v11.500H10" stroke="#333" />
          <path d="m2 10 4-4 2 2 3-5 3 5" stroke="#e01818" />
          <path d="m9.500 15 2.500-6 2.500 6M10.500 13h3" stroke="#111" />
        </Glyph>
      </FlatButton>
      <FlatButton aria-label="확대"><Glyph s={14}><path d="M8 3.500v9M3.500 8h9" stroke="#000" strokeWidth="2" /></Glyph></FlatButton>
      <FlatButton aria-label="축소"><Glyph s={14}><path d="M3 8h10" stroke="#000" strokeWidth="2" /></Glyph></FlatButton>
      <FlatButton>1:1</FlatButton>
    </FlatGroup>
    <Zoomer type="range" aria-label="배율" min={0} max={100} defaultValue={10} />
    <FlatButton aria-label="처음으로">
      <Glyph s={14}><path d="M4 3v10" stroke="#000" strokeWidth="2" /><path d="M12 3v10L6 8z" fill="#000" stroke="none" /></Glyph>
    </FlatButton>
    <FlatButton aria-label="끝으로">
      <Glyph s={14}><path d="M12 3v10" stroke="#000" strokeWidth="2" /><path d="M4 3v10l6-5z" fill="#000" stroke="none" /></Glyph>
    </FlatButton>
    <FlatButton aria-label="편집"><EditNote /></FlatButton>
    <FlatButton aria-label="좌우 이동"><BothWays /></FlatButton>
  </BottomBar>
);

export default function App() {
  return (
    <Page>
      <GlobalStyle />
      <Toolbars>
        <TopToolbar />
        <DrawToolbar />
      </Toolbars>
      <QuoteTable>
        <colgroup>
          {quotes.map((q) => <col key={q.name} width={q.w} />)}
          <col />
        </colgroup>
        <thead>
          <tr>
            {quotes.map((q) => <Th key={q.name} $strong={q.strong}>{q.name}</Th>)}
            <Th />
          </tr>
        </thead>
        <tbody>
          <tr>
            {quotes.map((q) => <Td key={q.name} $color={q.color} $strong={q.strong}>{q.value}</Td>)}
            <Td />
          </tr>
        </tbody>
      </QuoteTable>
      <FlowPane />
      <PricePane />
      <VolumePane />
      <TimePane />
      <Controls />
    </Page>
  );
}
